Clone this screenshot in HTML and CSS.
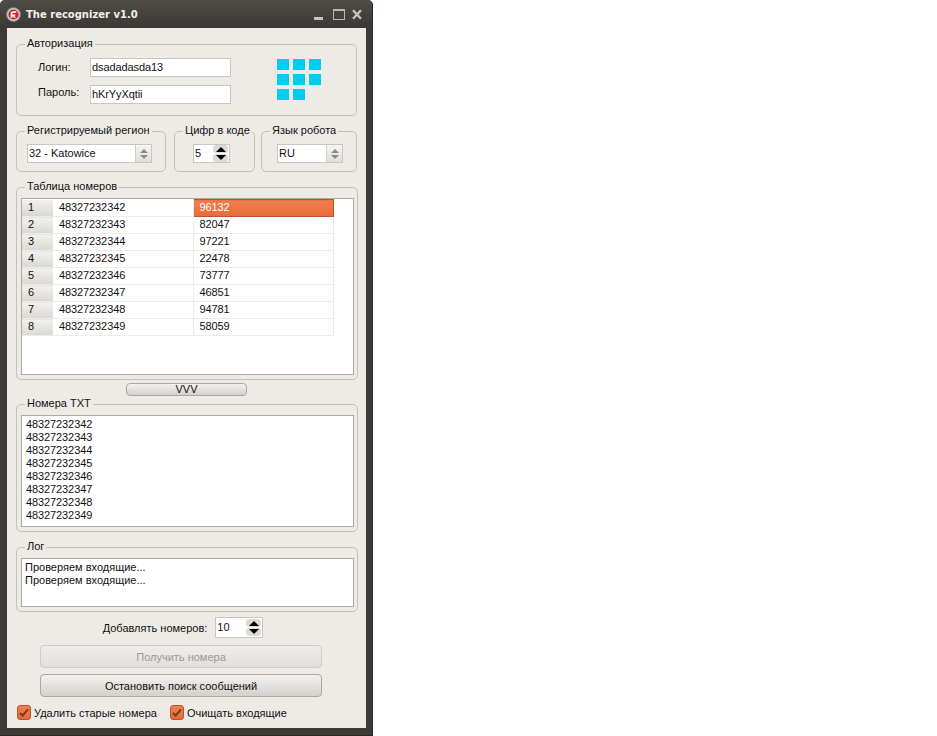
FILE: index.html
```html
<!DOCTYPE html>
<html lang="ru">
<head>
    <meta charset="UTF-8">
    <title>The recognizer v1.0</title>
    <link rel="stylesheet" href="styles.css">
</head>
<body>
<div class="window">

    <!-- Title bar -->
    <div class="titlebar">
        <svg class="app-icon" width="15" height="15" viewBox="0 0 16 16">
            <circle cx="8" cy="8" r="7.5" fill="#c9ccd2" stroke="#6d7078" stroke-width="1"/>
            <circle cx="8" cy="8" r="5.4" fill="#d8201c"/>
            <path d="M5 11.5V6.5Q5 4.5 7.5 4.5H11V6H8Q6.8 6 6.8 7V8H10V9.4H8.6L10.8 11.5H8.8L6.8 9.5V11.5Z" fill="#fff"/>
        </svg>
        <span class="title">The recognizer v1.0</span>
        <div class="controls">
            <span class="ctl-min"></span>
            <span class="ctl-max"></span>
            <svg class="ctl-close" width="10" height="11" viewBox="0 0 10 11">
                <path d="M1 1.2L9 9.8M9 1.2L1 9.8" stroke="#c6c6c0" stroke-width="2.4" fill="none"/>
            </svg>
        </div>
    </div>

    <div class="client">

        <!-- Auth -->
        <fieldset class="group auth">
            <legend>Авторизация</legend>
            <div class="auth-form">
                <div class="auth-row">
                    <span class="auth-label">Логин:</span>
                    <div class="field auth-input">dsadadasda13</div>
                </div>
                <div class="auth-row">
                    <span class="auth-label">Пароль:</span>
                    <div class="field auth-input">hKrYyXqtii</div>
                </div>
            </div>
            <div class="logo">
                <i></i><i></i><i></i>
                <i></i><i></i><i></i>
                <i></i><i></i>
            </div>
        </fieldset>

        <!-- Settings -->
        <div class="settings">
            <fieldset class="group region">
                <legend>Регистрируемый регион</legend>
                <div class="field combo combo-region">
                    <span class="combo-text">32 - Katowice</span>
                    <span class="combo-arrows"><b class="up"></b><b class="down"></b></span>
                </div>
            </fieldset>
            <fieldset class="group digits">
                <legend>Цифр в коде</legend>
                <div class="field spin spin-digits">
                    <span class="combo-text">5</span>
                    <span class="spin-btns"><b class="up"></b><b class="down"></b></span>
                </div>
            </fieldset>
            <fieldset class="group lang">
                <legend>Язык робота</legend>
                <div class="field combo combo-lang">
                    <span class="combo-text">RU</span>
                    <span class="combo-arrows"><b class="up"></b><b class="down"></b></span>
                </div>
            </fieldset>
        </div>

        <!-- Numbers table -->
        <fieldset class="group numbers">
            <legend>Таблица номеров</legend>
            <div class="table-box">
                <table>
                    <tbody>
                        <tr><th>1</th><td>48327232342</td><td class="selected">96132</td></tr>
                        <tr><th>2</th><td>48327232343</td><td>82047</td></tr>
                        <tr><th>3</th><td>48327232344</td><td>97221</td></tr>
                        <tr><th>4</th><td>48327232345</td><td>22478</td></tr>
                        <tr><th>5</th><td>48327232346</td><td>73777</td></tr>
                        <tr><th>6</th><td>48327232347</td><td>46851</td></tr>
                        <tr><th>7</th><td>48327232348</td><td>94781</td></tr>
                        <tr><th>8</th><td>48327232349</td><td>58059</td></tr>
                    </tbody>
                </table>
            </div>
        </fieldset>

        <button class="btn btn-vvv">VVV</button>

        <!-- Numbers as text -->
        <fieldset class="group txt">
            <legend>Номера TXT</legend>
            <div class="text-box txt-box">48327232342
48327232343
48327232344
48327232345
48327232346
48327232347
48327232348
48327232349</div>
        </fieldset>

        <!-- Log -->
        <fieldset class="group log">
            <legend>Лог</legend>
            <div class="text-box log-box">Проверяем входящие...
Проверяем входящие...</div>
        </fieldset>

        <div class="add-row">
            <span>Добавлять номеров:</span>
            <div class="field spin spin-add">
                <span class="combo-text">10</span>
                <span class="spin-btns"><b class="up"></b><b class="down"></b></span>
            </div>
        </div>

        <button class="btn btn-big" disabled>Получить номера</button>
        <button class="btn btn-big btn-stop">Остановить поиск сообщений</button>

        <div class="checks">
            <label class="check">
                <span class="box"><svg width="10" height="9" viewBox="0 0 10 9"><path d="M1 5L3.5 7.5L9 1.5" stroke="#7a3a1e" stroke-width="2" fill="none"/></svg></span>
                Удалить старые номера
            </label>
            <label class="check">
                <span class="box"><svg width="10" height="9" viewBox="0 0 10 9"><path d="M1 5L3.5 7.5L9 1.5" stroke="#7a3a1e" stroke-width="2" fill="none"/></svg></span>
                Очищать входящие
            </label>
        </div>
    </div>
</div>
</body>
</html>
```

FILE: styles.css
```css
* {
    box-sizing: border-box;
}
body {
    margin: 0;
    background: #fff;
    font-family: "Liberation Sans", Arial, sans-serif;
    font-size: 11px;
    color: #111;
}
.window {
    width: 373px;
    height: 736px;
    padding: 0 7px 7px;
    background: #3b3a36;
    border-radius: 5px 5px 0 0;
    border: 1px solid #2a2a27;
    border-width: 0 1px 1px 0;
    display: flex;
    flex-direction: column;
}
.titlebar {
    height: 28px;
    margin: 0 -7px;
    padding: 0 10px 0 6px;
    display: flex;
    align-items: center;
    background: linear-gradient(#4d4c46, #3a3935);
    border-radius: 5px 5px 0 0;
}
.app-icon {
    margin-right: 5px;
}
.title {
    font-family: "DejaVu Sans", sans-serif;
    font-weight: bold;
    font-size: 10px;
    color: #f2f0ec;
}
.controls {
    margin-left: auto;
    display: flex;
    align-items: center;
    gap: 7px;
}
.ctl-min {
    width: 9px;
    height: 3px;
    margin: 8px 3px 0 0;
    background: #c6c6c0;
}
.ctl-max {
    width: 12px;
    height: 11px;
    border: 1px solid #b8b8b2;
    border-top-width: 2px;
}
.client {
    flex: 1;
    width: 359px;
    padding: 0 9px;
    background: #eeebe7;
    display: flex;
    flex-direction: column;
}

/* group boxes */
.group {
    margin: 0;
    padding: 0;
    border: 1px solid #c3c1bd;
    border-radius: 5px;
    min-width: 0;
}
.group legend {
    margin-left: 8px;
    padding: 0 2px 2px;
    line-height: 14px;
    font-size: 11px;
    white-space: nowrap;
}
.auth {
    margin-top: 8px;
    height: 80px;
    display: flex;
    padding-top: 6px;
}
.auth-form {
    width: 194px;
    margin-left: 21px;
}
.auth-row {
    height: 27px;
    display: flex;
    align-items: flex-start;
}
.auth-label {
    width: 52px;
    line-height: 18px;
}
.auth-row + .auth-row .auth-label {
    line-height: 14px;
}
.auth-input {
    width: 141px;
    height: 19px;
    padding-left: 0;
    letter-spacing: -0.1px;
}
.logo {
    margin: 1px 0 0 45px;
    width: 44px;
    height: 42px;
    display: grid;
    grid-template-columns: repeat(3, 12px);
    grid-auto-rows: 11px;
    column-gap: 4px;
    row-gap: 4px;
}
.logo i {
    background: #00cdf0;
}
.field {
    background: #fff;
    border: 1px solid #c8c6c2;
    line-height: 17px;
    padding-left: 1px;
}
.settings {
    display: flex;
    margin-top: 7px;
}
.settings .group {
    height: 49px;
    padding-top: 5px;
}
.region {
    width: 150px;
}
.digits {
    width: 81px;
    margin-left: 8px;
}
.lang {
    width: 96px;
    margin-left: 6px;
}
.combo, .spin {
    height: 19px;
    display: flex;
    justify-content: space-between;
}
.combo-region {
    width: 125px;
    margin-left: 10px;
}
.combo-lang {
    width: 66px;
    margin-left: 15px;
}
.spin-digits {
    width: 37px;
    margin-left: 18px;
}
.combo-arrows {
    width: 16px;
    height: 17px;
    border-left: 1px solid #cfcdc9;
    background: linear-gradient(#f6f5f3, #e0dedb);
    display: flex;
    flex-direction: column;
    align-items: center;
    justify-content: center;
    gap: 2px;
}
.combo-arrows b {
    width: 0;
    height: 0;
    border: 4px solid transparent;
}
.combo-arrows .up {
    border-top-width: 0;
    border-bottom: 4px solid #8b8b88;
}
.combo-arrows .down {
    border-bottom-width: 0;
    border-top: 4px solid #8b8b88;
}
.spin-btns {
    width: 15px;
    margin-right: 1px;
    display: flex;
    flex-direction: column;
    justify-content: center;
    gap: 1px;
}
.spin-btns b {
    height: 8px;
    background: #dddbd7;
    border-radius: 3px;
    position: relative;
}
.spin-btns b::after {
    content: "";
    position: absolute;
    left: 3px;
    top: 2px;
    border: 5px solid transparent;
}
.spin-btns .up::after {
    border-top-width: 0;
    border-bottom: 5px solid #000;
}
.spin-btns .down::after {
    top: 1px;
    border-bottom-width: 0;
    border-top: 5px solid #000;
}

/* numbers table */
.numbers {
    margin-top: 7px;
    height: 201px;
    width: 342px;
    padding: 3px 0 0;
}
.table-box {
    height: 177px;
    width: 333px;
    margin-left: 4px;
    background: #fff;
    border: 1px solid #a9a9a5;
}
table {
    border-collapse: collapse;
    table-layout: fixed;
    width: 311px;
    letter-spacing: -0.1px;
}
tr {
    height: 17px;
}
th, td {
    vertical-align: top;
    line-height: 15px;
}
th {
    width: 31px;
    padding: 0 0 0 6px;
    text-align: left;
    font-weight: normal;
    background: linear-gradient(#f1f0ee, #d9d8d5);
    border-bottom: 1px solid #eeece8;
}
td {
    width: 140px;
    padding: 0 0 0 6px;
    border-right: 1px solid #eeece8;
    border-bottom: 1px solid #eeece8;
}
td.selected {
    color: #fff;
    background: linear-gradient(#ef7d4f, #e86c3a);
    border: 1px solid #b9532a;
}
.btn {
    display: block;
    padding: 0;
    font-family: inherit;
    font-size: 11px;
    color: #111;
    border: 1px solid #a9a8a4;
    border-radius: 4px;
    background: linear-gradient(#f3f2f0, #d2d1ce);
}
.btn-vvv {
    width: 121px;
    height: 13px;
    line-height: 11px;
    margin: 3px 0 0 110px;
}
.txt {
    height: 136px;
    width: 342px;
    padding: 3px 0 0;
}
.text-box {
    width: 333px;
    margin-left: 4px;
    background: #fff;
    border: 1px solid #a9a9a5;
    padding: 2px 4px;
    line-height: 13px;
    white-space: pre;
}
.txt-box {
    height: 112px;
    letter-spacing: -0.1px;
}
.log {
    margin-top: 7px;
    height: 73px;
    width: 342px;
    padding: 3px 0 0;
}
.log-box {
    height: 49px;
    padding-left: 3px;
}
.add-row {
    margin-top: 5px;
    height: 21px;
    display: flex;
    justify-content: center;
    align-items: center;
    gap: 8px;
    padding-right: 7px;
}
.spin-add {
    width: 48px;
    height: 21px;
    line-height: 19px;
}
.btn-big {
    width: 282px;
    height: 23px;
    margin: 7px 0 0 24px;
}
.btn-big[disabled] {
    color: #9a9a98;
    border-color: #cfcdc9;
    background: linear-gradient(#efeeec, #e0dfdc);
}
.btn-stop {
    margin-top: 6px;
}
.checks {
    margin: 8px 0 0 1px;
    display: flex;
    gap: 13px;
}
.check {
    display: flex;
    align-items: center;
    gap: 3px;
}
.box {
    width: 14px;
    height: 15px;
    background: linear-gradient(#f08050, #e4693a);
    border: 1px solid #b9532a;
    border-radius: 3px;
    display: flex;
    align-items: center;
    justify-content: center;
}
```
